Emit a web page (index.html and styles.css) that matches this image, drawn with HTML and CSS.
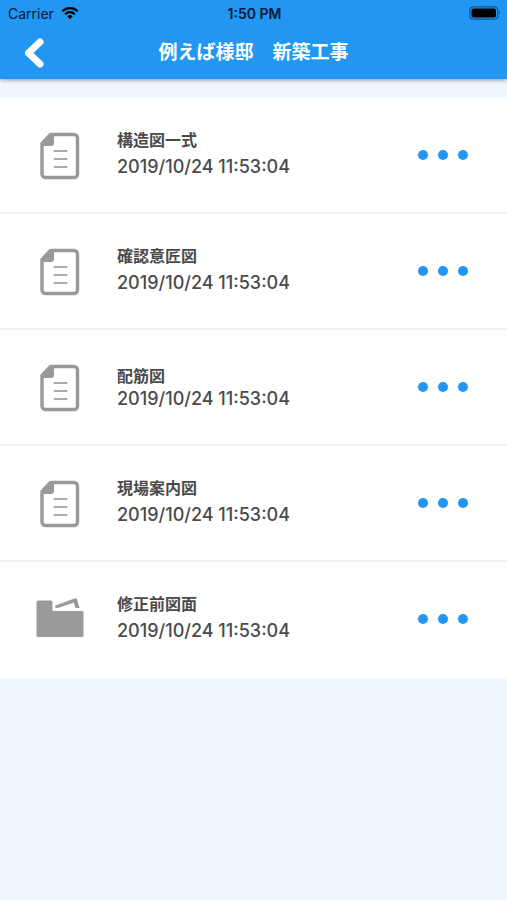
FILE: index.html
```html
<!DOCTYPE html>
<html lang="ja">
<head>
    <meta charset="UTF-8">
    <meta name="viewport" content="width=device-width, initial-scale=1.0">
    <title>例えば様邸 新築工事</title>
    <link rel="stylesheet" href="styles.css">
</head>
<body>
    <header class="header">
        <div class="status-bar">
            <div class="carrier">
                <span>Carrier</span>
                <svg width="18" height="14" viewBox="0 0 18 14" aria-hidden="true">
                    <g fill="none" stroke="#000" stroke-width="2.3">
                        <path d="M1.3 5.2a11 11 0 0 1 15.4 0"/>
                        <path d="M4.2 8.2a6.8 6.8 0 0 1 9.6 0"/>
                    </g>
                    <path d="M6.3 10.4a3.8 3.8 0 0 1 5.4 0L9 13z"/>
                </svg>
            </div>
            <time class="clock">1:50 PM</time>
            <svg class="battery" width="32" height="14" viewBox="0 0 32 14" aria-hidden="true">
                <rect x=".8" y=".8" width="28" height="12.4" rx="3.5" fill="none" stroke="#10548f" stroke-width="1.2"/>
                <rect x="2.5" y="2.5" width="24.5" height="9" rx="2"/>
                <path d="M30 5q2 2 0 4z" fill="#10548f"/>
            </svg>
        </div>
        <div class="nav-bar">
            <button class="back" type="button" aria-label="戻る">
                <svg width="20" height="30" viewBox="0 0 20 30">
                    <path d="M16 4 4.500 15 16 26" fill="none" stroke="#fff" stroke-width="7" stroke-linecap="round" stroke-linejoin="round"/>
                </svg>
            </button>
            <h1>例えば様邸　新築工事</h1>
        </div>
    </header>

    <svg class="symbols" aria-hidden="true">
        <symbol id="file" viewBox="0 0 48 48">
            <path d="M14.500 2.500H38a3.500 3.500 0 0 1 3.500 3.500v36a3.500 3.500 0 0 1-3.500 3.500H9.500A3.500 3.500 0 0 1 6 42V11.500z" fill="none" stroke="#999" stroke-width="3.400" stroke-linejoin="round"/>
            <path d="M15 2h3v9a3 3 0 0 1-3 3H5v-2.500z" fill="#999"/>
            <path d="M18.500 19h12M18.500 27h12M18.500 35h12" stroke="#aaa" stroke-width="2" stroke-linecap="round"/>
        </symbol>
        <symbol id="folder" viewBox="0 0 48 48">
            <path d="M2 4.500h13A1.500 1.500 0 0 1 16.500 6v9H46a1.500 1.500 0 0 1 1.500 1.500V39.500A1.500 1.500 0 0 1 46 41H2A1.500 1.500 0 0 1 .5 39.500V6A1.500 1.500 0 0 1 2 4.500z" fill="#999"/>
            <path d="M19.500 9.500 39 2.300q1.500-.4 2 1L43.500 12h-4L38 6.500 21 12.300q-3-.8-1.500-2.800z" fill="#999"/>
        </symbol>
    </svg>

    <main>
        <ul class="list">
            <li class="item">
                <svg class="icon"><use href="#file"/></svg>
                <div class="info">
                    <h2>構造図一式</h2>
                    <time>2019/10/24 11:53:04</time>
                </div>
                <button class="more" type="button" aria-label="メニュー"><span></span><span></span><span></span></button>
            </li>
            <li class="item">
                <svg class="icon"><use href="#file"/></svg>
                <div class="info">
                    <h2>確認意匠図</h2>
                    <time>2019/10/24 11:53:04</time>
                </div>
                <button class="more" type="button" aria-label="メニュー"><span></span><span></span><span></span></button>
            </li>
            <li class="item">
                <svg class="icon"><use href="#file"/></svg>
                <div class="info compact">
                    <h2>配筋図</h2>
                    <time>2019/10/24 11:53:04</time>
                </div>
                <button class="more" type="button" aria-label="メニュー"><span></span><span></span><span></span></button>
            </li>
            <li class="item">
                <svg class="icon"><use href="#file"/></svg>
                <div class="info">
                    <h2>現場案内図</h2>
                    <time>2019/10/24 11:53:04</time>
                </div>
                <button class="more" type="button" aria-label="メニュー"><span></span><span></span><span></span></button>
            </li>
            <li class="item">
                <svg class="icon"><use href="#folder"/></svg>
                <div class="info">
                    <h2>修正前図面</h2>
                    <time>2019/10/24 11:53:04</time>
                </div>
                <button class="more" type="button" aria-label="メニュー"><span></span><span></span><span></span></button>
            </li>
        </ul>
    </main>
</body>
</html>
```
FILE: styles.css
```css
* {
    margin: 0;
    padding: 0;
    box-sizing: border-box;
}

:root {
    --primary: #2196f3;
    --background: #eef7fd;
    --text: #4a4a4a;
}

body {
    background: var(--background);
    color: var(--text);
    font-family: Inter, "Noto Sans CJK JP", sans-serif;
}

button {
    background: none;
    border: none;
    cursor: pointer;
}

.header {
    background: var(--primary);
    box-shadow: 0 1px 4px rgba(0, 0, 0, 0.4);
}

.status-bar {
    display: grid;
    grid-template-columns: 1fr auto 1fr;
    align-items: center;
    height: 26px;
    padding: 0 6px 0 8px;
    color: #001a33;
    font-size: 14px;
}

.carrier {
    display: flex;
    align-items: center;
    gap: 7px;
}

.clock {
    font-weight: 600;
}

.battery {
    justify-self: end;
}

.nav-bar {
    display: grid;
    grid-template-columns: 48px 1fr 48px;
    align-items: center;
    height: 53px;
}

.back {
    display: flex;
    justify-content: flex-end;
    padding-right: 4px;
}

.nav-bar h1 {
    color: #fff;
    font-size: 19px;
    font-weight: 700;
    line-height: 28px;
    text-align: center;
}

.symbols {
    display: none;
}

.list {
    margin-top: 19px;
    background: #fff;
    list-style: none;
}

.item {
    display: flex;
    align-items: center;
    height: 116px;
    padding: 0 32px 0 36px;
    border-bottom: 2px solid #edf5f8;
}

.item:last-child {
    border-bottom-color: #fff;
}

.icon {
    flex: none;
    width: 48px;
    height: 48px;
    margin-top: 2px;
}

.info {
    flex: 1;
    margin-left: 33px;
    padding-bottom: 4px;
}

.info h2 {
    font-size: 16px;
    font-weight: 700;
    line-height: 28px;
}

.info time {
    display: block;
    font-size: 18px;
    font-weight: 500;
    line-height: 26px;
}

.compact {
    padding-bottom: 0;
}

.compact h2 {
    line-height: 24px;
}

.compact time {
    line-height: 22px;
}

.more {
    display: flex;
    gap: 10px;
    padding: 7px;
}

.more span {
    width: 10px;
    height: 10px;
    border-radius: 50%;
    background: var(--primary);
}
```
